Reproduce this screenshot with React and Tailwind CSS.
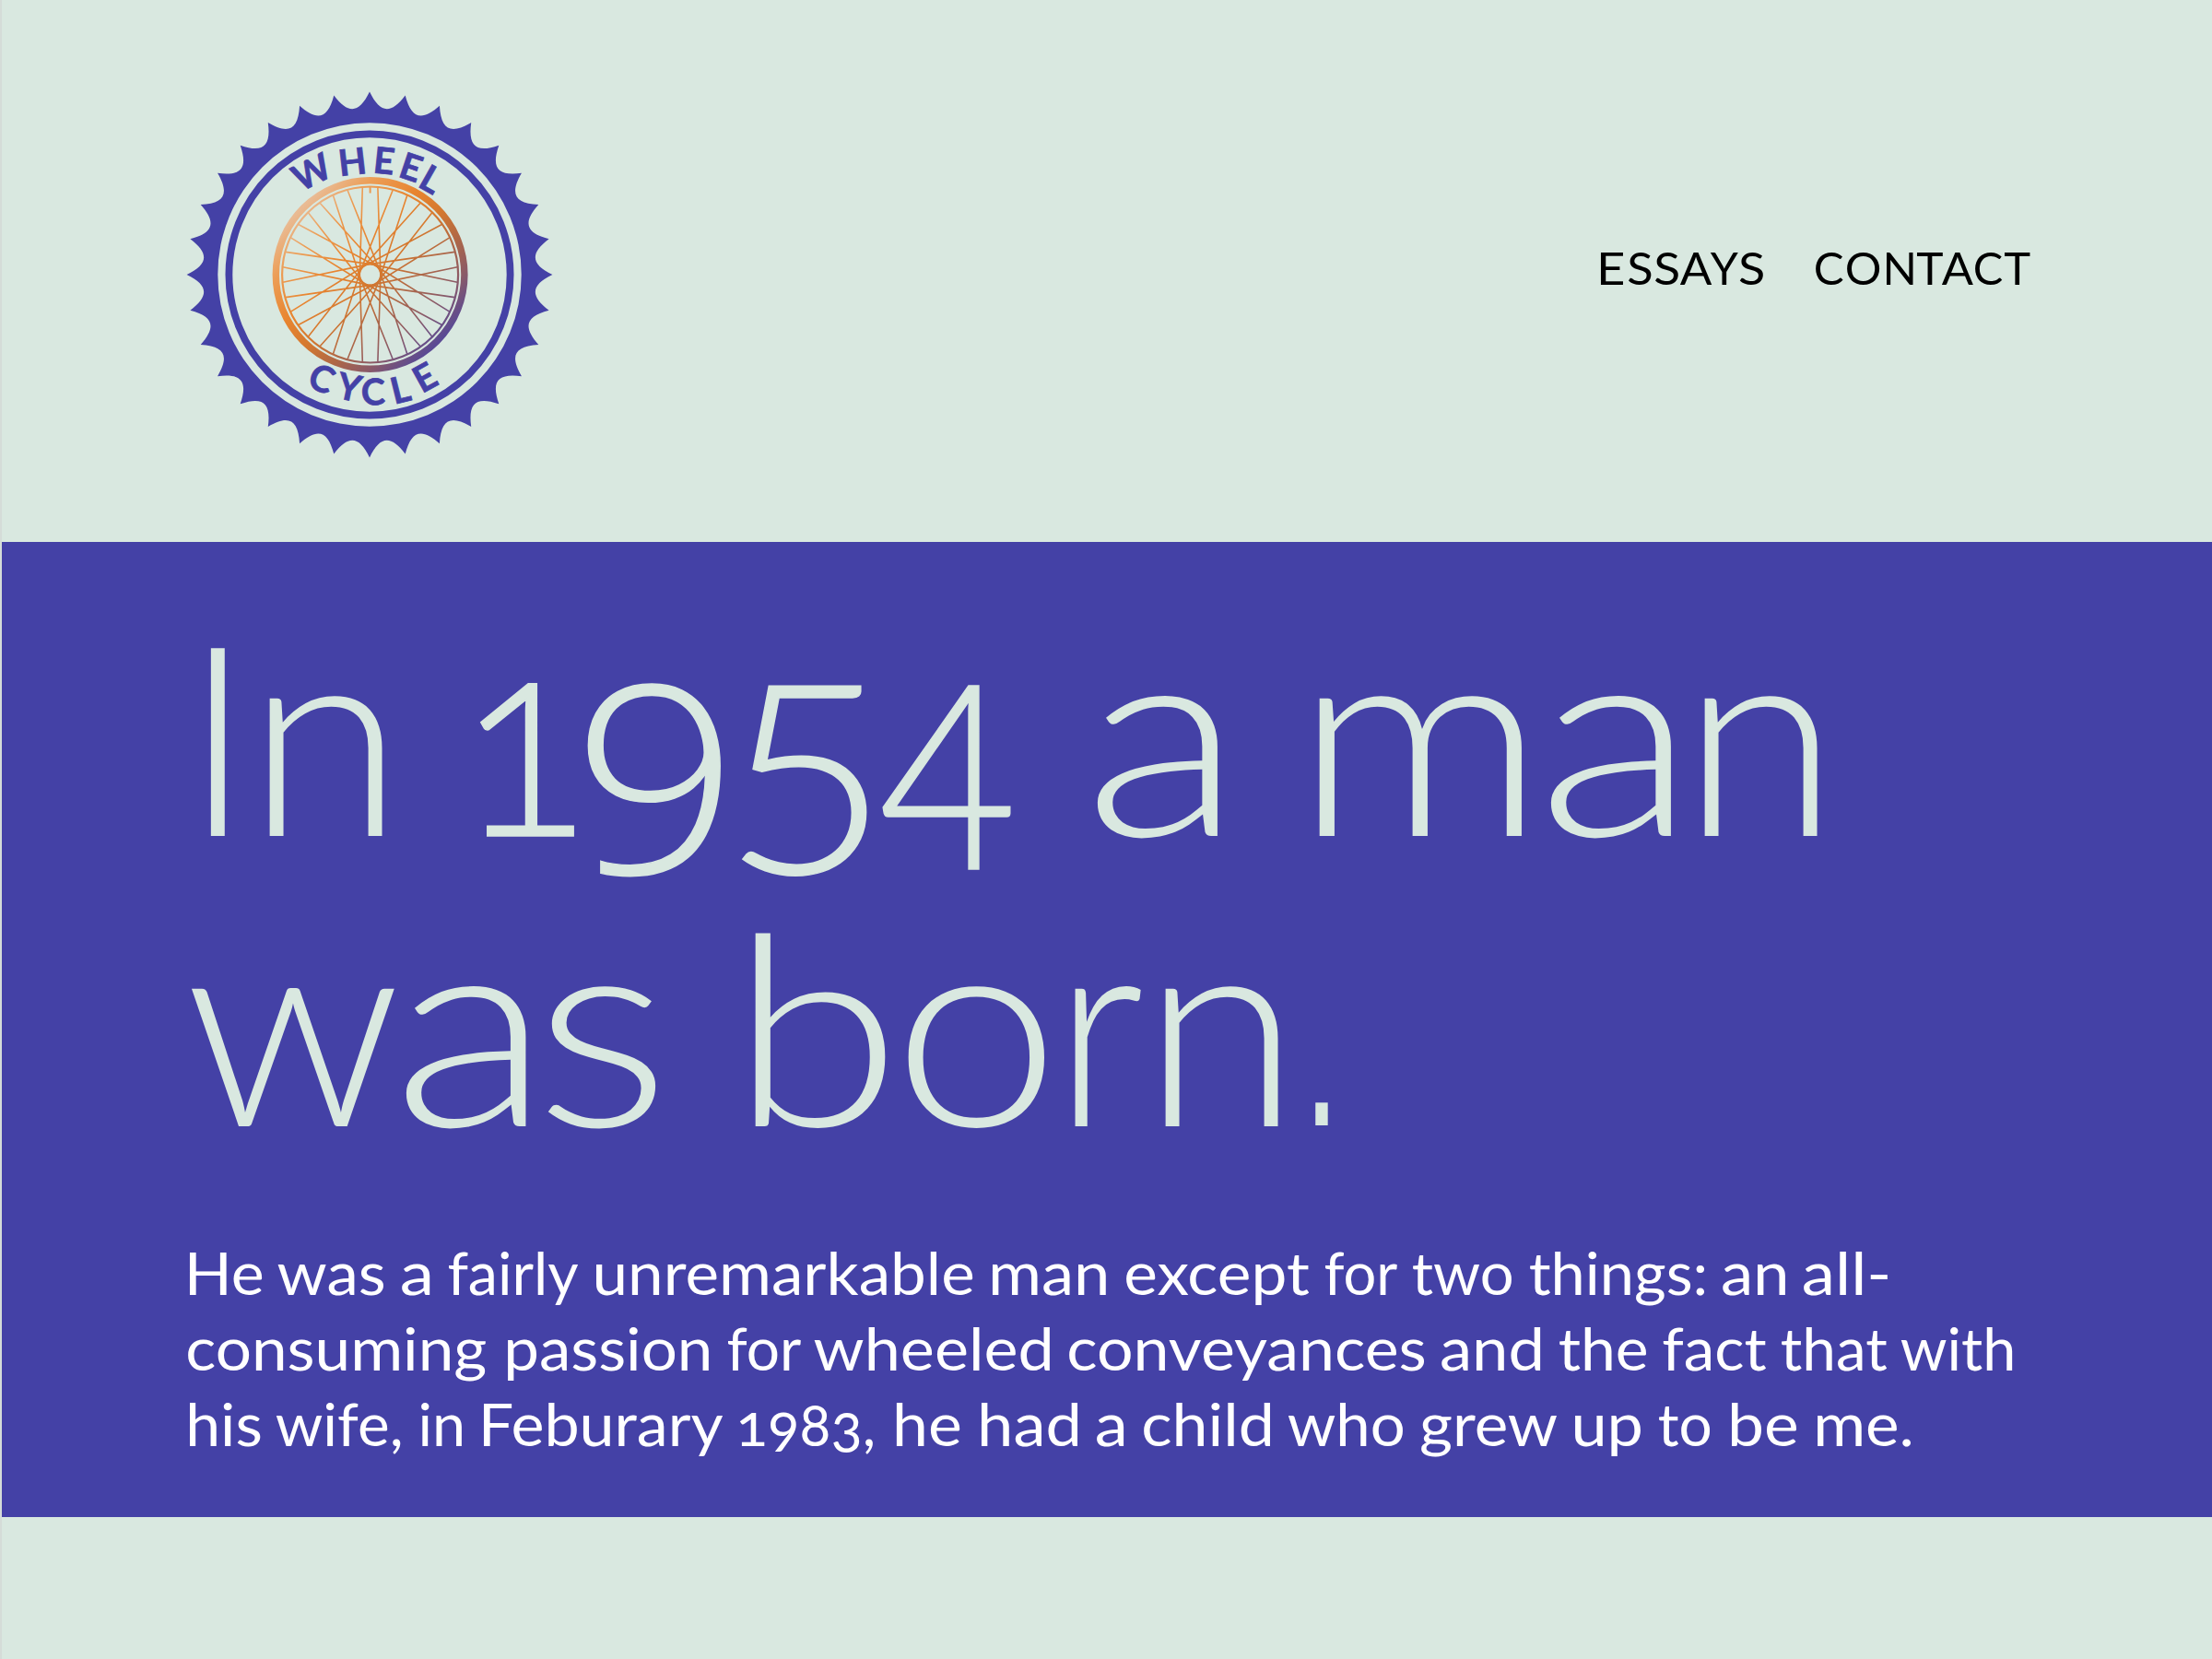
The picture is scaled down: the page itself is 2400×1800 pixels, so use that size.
import React, { useLayoutEffect, useRef, useState } from "react";

const rad = (deg) => (deg * Math.PI) / 180;
const polar = (r, deg) => [r * Math.sin(rad(deg)), -r * Math.cos(rad(deg))];
const pt = ([x, y]) => `${x.toFixed(2)} ${y.toFixed(2)}`;

/* Horizontal ink extent of a text in em, found by scanning its painted pixels. */
const extents = new Map();
function inkExtent(text, weight, family) {
  const key = `${weight}|${family}|${text}`;
  if (!extents.has(key)) {
    const size = 200;
    const pad = 60;
    const canvas = document.createElement("canvas");
    let ctx = canvas.getContext("2d");
    ctx.font = `${weight} ${size}px ${family}`;
    const w = Math.ceil(ctx.measureText(text).width) + pad * 2;
    const h = size * 2;
    canvas.width = w;
    canvas.height = h;
    ctx = canvas.getContext("2d");
    ctx.font = `${weight} ${size}px ${family}`;
    ctx.fillText(text, pad, size * 1.3);
    const data = ctx.getImageData(0, 0, w, h).data;
    let lo = w;
    let hi = 0;
    for (let y = 0; y < h; y++) {
      for (let x = 0; x < w; x++) {
        if (data[(y * w + x) * 4 + 3] > 110) {
          if (x < lo) lo = x;
          if (x + 1 > hi) hi = x + 1;
        }
      }
    }
    extents.set(key, [(lo - pad) / size, (hi - pad) / size]);
  }
  return extents.get(key);
}

/* Chainring outline: 32 pointed teeth joined by rounded valleys. */
const TEETH = 32;
const STEP = 360 / TEETH;
let ring = `M${pt(polar(198.4, 0))}`;
for (let i = 0; i < TEETH; i++) {
  const a = i * STEP;
  ring += `C${pt(polar(175.3, a + STEP * 0.33))} ${pt(polar(175.3, a + STEP * 0.67))} ${pt(polar(198.4, a + STEP))}`;
}
ring += "ZM164.7 0A164.7 164.7 0 1 0 -164.7 0A164.7 164.7 0 1 0 164.7 0Z";

/* Spokes leave the hub tangentially, alternating sides. */
let spokes = "";
for (let i = 0; i < 36; i++) {
  const a = 5 + i * 10;
  const side = i % 2 === 0 ? 85 : -85;
  spokes += `M${pt(polar(95, a))}L${pt(polar(11.3, a + side))}`;
}

/* Badge letters: centre x, centre y, rotation. */
const WHEEL = [
  ["W", -63, -111.3, -27],
  ["H", -18.7, -122.7, -6.5],
  ["E", 16.5, -123.7, 6],
  ["E", 45.8, -116.3, 18.5],
  ["L", 68, -103, 29.5],
];
const CYCLE = [
  ["C", -51.3, 113, 22],
  ["Y", -22, 122, 12],
  ["C", 4.5, 127, -1],
  ["L", 34.5, 124.2, -14],
  ["E", 60.5, 111, -29],
];

function BadgeText({ letters }) {
  const size = 39.5;
  const xs = [];
  const ys = [];
  letters.forEach(([ch, cx, cy, rot]) => {
    const [lo, hi] = inkExtent(ch, 700, "Lato, sans-serif");
    const dx = (-(lo + hi) / 2) * size;
    const dy = 0.36 * size;
    xs.push((cx + dx * Math.cos(rad(rot)) - dy * Math.sin(rad(rot))).toFixed(2));
    ys.push((cy + dx * Math.sin(rad(rot)) + dy * Math.cos(rad(rot))).toFixed(2));
  });
  return (
    <text
      x={xs.join(" ")}
      y={ys.join(" ")}
      rotate={letters.map((l) => l[3]).join(" ")}
      fontSize={size}
      stroke="#4441a6"
      strokeWidth="0.7"
      className="fill-[#4441a6] font-['Lato',sans-serif] font-bold"
    >
      {letters.map((l) => l[0]).join("")}
    </text>
  );
}

function Logo() {
  return (
    <svg viewBox="-200 -200 400 400" className="size-[400px] shrink-0">
      <defs>
        <linearGradient id="rim" gradientUnits="userSpaceOnUse" x1="-75" y1="-75" x2="75" y2="75">
          <stop offset="0.01" stopColor="#e9bb94" />
          <stop offset="0.16" stopColor="#ec9e57" />
          <stop offset="0.36" stopColor="#e88530" />
          <stop offset="0.53" stopColor="#d4782f" />
          <stop offset="0.69" stopColor="#ae6747" />
          <stop offset="0.84" stopColor="#8a5a68" />
          <stop offset="0.99" stopColor="#5a4a94" />
        </linearGradient>
      </defs>
      <path d={ring} fill="#4441a6" fillRule="evenodd" />
      <circle r="152.6" fill="none" stroke="#4441a6" strokeWidth="7.8" />
      <g fill="none" stroke="url(#rim)" transform="translate(0.6 0)">
        <circle r="102.3" strokeWidth="7.4" />
        <circle r="95.5" strokeWidth="2.2" />
        <circle r="12" strokeWidth="2.4" />
        <path d={spokes} strokeWidth="1.6" />
        <path d="M-0.01 -95L0.01 -88.5" strokeWidth="2" />
      </g>
      <BadgeText letters={WHEEL} />
      <BadgeText letters={CYCLE} />
    </svg>
  );
}

/* Text stretched so that its ink runs from x0 to x1; the box reaches to the next piece. */
function Fit({ text, x0, x1, next, shift = 0, grow = 1, className = "" }) {
  const ref = useRef(null);
  const [transform, setTransform] = useState("none");
  useLayoutEffect(() => {
    const cs = getComputedStyle(ref.current);
    const size = parseFloat(cs.fontSize);
    const [lo, hi] = inkExtent(text.trim(), cs.fontWeight, cs.fontFamily);
    const s = (x1 - x0) / ((hi - lo) * size);
    setTransform(`translate(${-lo * size * s}px, ${shift}px) scale(${s}, ${grow})`);
  }, [text, x0, x1, shift, grow]);
  return (
    <span className="inline-block whitespace-pre" style={{ width: next - x0 }}>
      <span ref={ref} className={`inline-block origin-[0_85.3%] ${className}`} style={{ transform }}>
        {text}
      </span>
    </span>
  );
}

function Line({ pieces, left, className = "" }) {
  return (
    <span className={`block whitespace-nowrap ${className}`} style={{ paddingLeft: pieces[0][1] - left }}>
      {pieces.map(([text, x0, x1, extra], i) => (
        <Fit key={i} text={text} x0={x0} x1={x1} next={pieces[i + 1] ? pieces[i + 1][1] : x1} {...extra} />
      ))}
    </span>
  );
}

const spaced = (words) => words.map(([text, ...rest]) => [text + " ", ...rest]);

const NAV = [
  ["E", 1736.8, 1761], ["S", 1766.8, 1791.2], ["S", 1796.1, 1820.9], ["A", 1823, 1857.3], ["Y", 1855.8, 1885.5], ["S ", 1887.7, 1912.8],
  ["C", 1969.7, 1999.2], ["O", 2004, 2039.2], ["N", 2046.8, 2075.3], ["T", 2080.2, 2108], ["A", 2106.8, 2140.7], ["C", 2142.8, 2172], ["T", 2174.6, 2202],
];

const low = { grow: 1.042 };
const TITLE = [
  [
    ["I", 228.8, 243.3], ["n ", 292.4, 415.4, low],
    ["1", 527, 628.5, { grow: 1.045, className: "[font-feature-settings:'onum'] [-webkit-text-stroke:1.5px]" }],
    ["9", 639.4, 782.2, { shift: 40.5, grow: 0.985, className: "font-['Open_Sans',sans-serif] [-webkit-text-stroke:1.5px]" }],
    ["5", 806.8, 939.5, { shift: 41, className: "[-webkit-text-stroke:1.5px]" }],
    ["4 ", 958.2, 1096.5, { shift: 36, grow: 0.975, className: "[-webkit-text-stroke:1.5px]" }],
    ["a ", 1190, 1320.2, low],
    ["m", 1431.1, 1651.7, low], ["a", 1682, 1812.2, low], ["n", 1849.2, 1972.2, low],
  ],
  [
    ["w", 208.2, 428.1, low], ["a", 440.2, 569.9, low], ["s ", 594.7, 711.7, low],
    ["b", 819.5, 961.3], ["o", 984.9, 1132.7, low], ["r", 1165.7, 1237.2, low], ["n", 1263.9, 1386.9, low],
    [".", 1426.9, 1440.2, { grow: 0.8, shift: -3.5, className: "font-['Liberation_Sans',sans-serif]" }],
  ],
];

const BODY = [
  [["He", 206, 284], ["was", 302, 416], ["a", 436, 466], ["fairly", 487, 627], ["unremarkable", 647, 1055], ["man", 1077, 1200], ["except", 1222, 1420], ["for", 1438, 1516], ["two", 1533, 1640], ["things:", 1660, 1849], ["an", 1869, 1937], ["all-", 1957, 2048]],
  [["consuming", 204, 527], ["passion", 551, 769], ["for", 790, 869], ["wheeled", 884, 1139], ["conveyances", 1160, 1545], ["and", 1564, 1671], ["the", 1692, 1786], ["fact", 1805, 1916], ["that", 1933, 2047], ["with", 2063, 2183]],
  [["his", 206, 282], ["wife,", 300, 434], ["in", 457, 501], ["Feburary", 525, 784], ["1983,", 804, 957, { className: "[font-feature-settings:'onum']" }], ["he", 973, 1041], ["had", 1065, 1169], ["a", 1190, 1219], ["child", 1241, 1378], ["who", 1398, 1522], ["grew", 1542, 1689], ["up", 1709, 1780], ["to", 1800, 1855], ["be", 1879, 1949], ["me.", 1972, 2073]],
];

export default function App() {
  return (
    <div className="flex h-[1800px] w-[2400px] flex-col overflow-hidden border-l-2 border-[#d5dcd8] bg-[#d9e8e0] font-['Lato',sans-serif]">
      <header className="flex h-[588px] shrink-0 justify-between pt-[98px] pr-[198px] pl-[199px]">
        <Logo />
        <nav className="pt-[163px] text-[48px] leading-[60px] text-black">
          <Line left={1736.8} pieces={NAV} />
        </nav>
      </header>
      <main className="h-[1058px] shrink-0 bg-[#4441a6] pt-[49px] pl-[200px]">
        <h1 className="text-[288px] leading-[316px] font-light text-[#d9e8e0]">
          {TITLE.map((w, i) => (
            <Line key={i} pieces={w} left={202} className="h-[316px]" />
          ))}
        </h1>
        <p className="mt-[71px] text-[64px] leading-[82px] text-white">
          {BODY.map((w, i) => (
            <Line key={i} pieces={spaced(w)} left={202} />
          ))}
        </p>
      </main>
    </div>
  );
}
